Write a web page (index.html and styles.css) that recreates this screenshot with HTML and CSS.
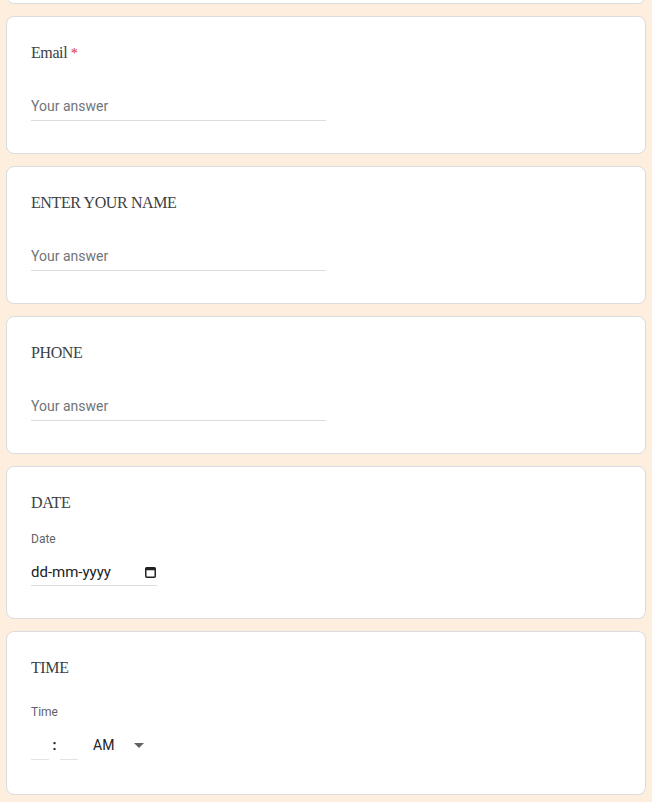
FILE: index.html
```html
<!DOCTYPE html>
<html lang="en">
<head>
<meta charset="utf-8">
<title>Form</title>
<link rel="stylesheet" href="styles.css">
</head>
<body>
<main class="form">
  <div class="prev-clip"><div class="card prev-card"></div></div>

  <section class="card">
    <h2 class="q-title">Email <span class="req">*</span></h2>
    <div class="field text-field"><input type="text" placeholder="Your answer"></div>
  </section>

  <section class="card">
    <h2 class="q-title">ENTER YOUR NAME</h2>
    <div class="field text-field"><input type="text" placeholder="Your answer"></div>
  </section>

  <section class="card">
    <h2 class="q-title">PHONE</h2>
    <div class="field text-field"><input type="text" placeholder="Your answer"></div>
  </section>

  <section class="card">
    <h2 class="q-title">DATE</h2>
    <div class="sub-label sub-label-date">Date</div>
    <div class="field date-field">
      <span class="date-text">dd-mm-yyyy</span>
      <svg class="cal-icon" width="11" height="12" viewBox="0 0 11 12" aria-hidden="true">
        <rect x="0.75" y="1.75" width="9.5" height="9.5" rx="1" fill="none" stroke="#202124" stroke-width="1.5"/>
        <rect x="0.75" y="1.75" width="9.5" height="2.5" fill="#202124"/>
      </svg>
    </div>
  </section>

  <section class="card card-time">
    <h2 class="q-title">TIME</h2>
    <div class="sub-label sub-label-time">Time</div>
    <div class="time-row">
      <input class="time-box" type="text" aria-label="Hour">
      <span class="colon">:</span>
      <input class="time-box" type="text" aria-label="Minute">
      <span class="ampm">AM</span>
      <span class="caret"></span>
    </div>
  </section>
</main>
</body>
</html>
```
FILE: styles.css
```css
html, body {
  margin: 0;
  padding: 0;
}

body {
  background: #fdeedd;
  font-family: Roboto, "Liberation Sans", Arial, sans-serif;
  color: #202124;
}

.form {
  display: flex;
  flex-direction: column;
  gap: 12px;
  padding: 0 6px 7px;
}

.prev-clip {
  height: 4px;
  overflow: hidden;
  display: flex;
  flex-direction: column;
  justify-content: flex-end;
}

.prev-card {
  flex: none;
  height: 40px;
  padding: 0;
}

.card {
  background: #fff;
  border: 1px solid #dadce0;
  border-radius: 8px;
  padding: 24px 24px 32px;
}

.card-time {
  padding-bottom: 34px;
}

.q-title {
  margin: 0;
  height: 24px;
  font-family: "Liberation Serif", "Times New Roman", serif;
  font-weight: normal;
  font-size: 16px;
  line-height: 24px;
  letter-spacing: -0.4px;
  color: #3c4043;
}

.req {
  color: #d93025;
  font-size: 14px;
  line-height: 1;
}

.field {
  border-bottom: 1px solid #dadce0;
  padding-bottom: 4px;
}

.text-field {
  width: 295px;
  margin-top: 31px;
}

.text-field input {
  display: block;
  width: 100%;
  border: 0;
  outline: 0;
  padding: 0;
  margin: 0;
  background: transparent;
  font-family: Roboto, "Liberation Sans", Arial, sans-serif;
  font-size: 14px;
  line-height: 20px;
  height: 20px;
  color: #202124;
}

.text-field input::placeholder {
  color: #70757a;
  opacity: 1;
}

.sub-label {
  font-size: 12px;
  line-height: 16px;
  color: #5f6368;
}

.sub-label-date {
  margin-top: 16px;
}

.sub-label-time {
  margin-top: 24px;
}

.date-field {
  width: 126px;
  margin-top: 15px;
  padding-bottom: 3px;
  display: flex;
  align-items: center;
  justify-content: space-between;
  height: 20px;
}

.date-text {
  font-size: 15px;
  line-height: 20px;
  color: #202124;
}

.cal-icon {
  display: block;
  margin-right: 1px;
}

.time-row {
  margin-top: 15px;
  display: flex;
  align-items: flex-start;
  height: 25px;
}

.time-box {
  width: 18px;
  height: 20px;
  padding: 0 0 4px;
  margin: 0;
  border: 0;
  border-bottom: 1px solid #e3e3e3;
  outline: 0;
  background: transparent;
  font-family: Roboto, "Liberation Sans", Arial, sans-serif;
  font-size: 14px;
  box-sizing: content-box;
}

.colon {
  width: 11px;
  text-align: center;
  font-size: 14px;
  font-weight: bold;
  line-height: 20px;
  color: #202124;
}

.ampm {
  margin-left: 15px;
  font-size: 14px;
  line-height: 20px;
  color: #202124;
}

.caret {
  margin-left: 20px;
  margin-top: 8px;
  width: 0;
  height: 0;
  border-left: 5px solid transparent;
  border-right: 5px solid transparent;
  border-top: 5px solid #5f6368;
}
```
